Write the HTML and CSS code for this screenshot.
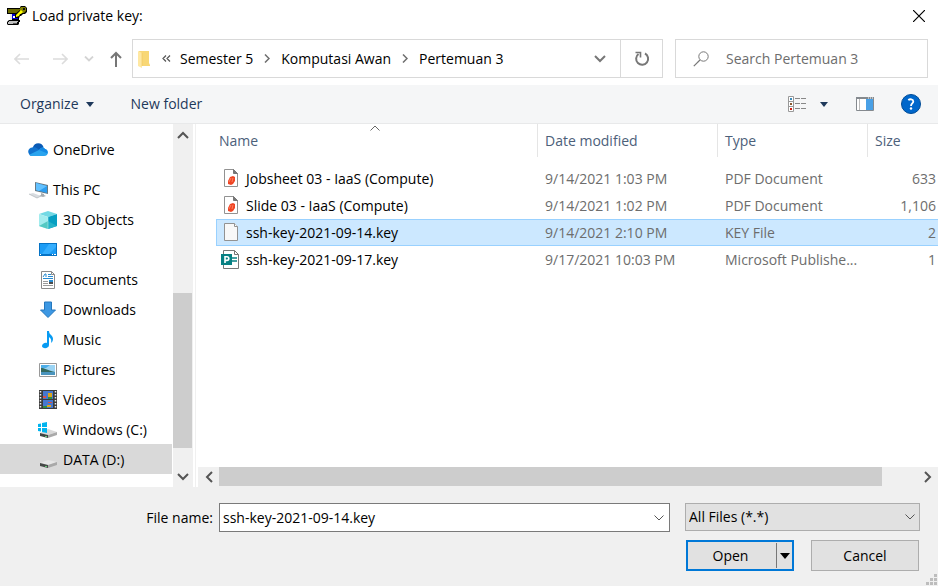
FILE: index.html
```html
<!DOCTYPE html>
<html lang="en">
<head>
<meta charset="utf-8">
<meta name="viewport" content="width=device-width, initial-scale=1">
<title>Load private key</title>
<link rel="stylesheet" href="styles.css">
</head>
<body>
<div class="dialog">
  <header class="titlebar">
    <svg class="app-icon" width="20" height="20" viewBox="0 0 20 20" aria-hidden="true">
      <path d="M0 2h14v6H0z" fill="#000"/><path d="M1 3h12v4H1z" fill="#6b6b00"/>
      <path d="M3 8h9v7H3z" fill="#000"/><path d="M3 8h2v6H3z" fill="#e8e8e8"/><path d="M5 8h6v5H5z" fill="#0000d8"/><path d="M6 10h2v2H6z" fill="#fff"/>
      <path d="M2 14h11v2h-1v2l-1 1H1l-1-1v-2z" fill="#000"/><path d="M2 15h9v1H2zM1 16h9v2H1z" fill="#c0c0c0"/><path d="M6 17h4v1H6z" fill="#555"/>
      <path d="M14 0h4l2 2v4l-2 2h-2l-2 2h-1l-1 2H8V8l5-4V1z" fill="#000"/>
      <path d="M14 1h4l1 1v3l-2 2h-2l-2-2V2z" fill="#808000"/><path d="M14 4l2 2-2 2h-1l-1 2-3 1V9z" fill="#ff0"/><path d="M16 2h2v2h-2z" fill="#111"/>
    </svg>
    <h1 class="title">Load private key:</h1>
    <button class="icon-button close" aria-label="Close"><svg width="12" height="12" viewBox="0 0 12 12"><path d="M0 0l12 12M12 0L0 12" stroke="#000" stroke-width="1.2"/></svg></button>
  </header>

  <div class="navbar">
    <nav class="history" aria-label="History">
      <button class="icon-button" aria-label="Back"><svg width="16" height="12" viewBox="0 0 16 12"><path d="M15 6H1M6 1L1 6l5 5" fill="none" stroke="#dcdcdc" stroke-width="1.6"/></svg></button>
      <button class="icon-button" aria-label="Forward"><svg width="16" height="12" viewBox="0 0 16 12"><path d="M1 6h14M10 1l5 5-5 5" fill="none" stroke="#dcdcdc" stroke-width="1.6"/></svg></button>
      <button class="icon-button recent" aria-label="Recent locations"><svg width="10" height="6" viewBox="0 0 10 6"><path d="M1 .5l4 4 4-4" fill="none" stroke="#d4d4d4" stroke-width="1.800"/></svg></button>
      <button class="icon-button" aria-label="Up"><svg width="12" height="16" viewBox="0 0 12 16"><path d="M6 16V2M1 7l5-5 5 5" fill="none" stroke="#767676" stroke-width="2"/></svg></button>
    </nav>
    <div class="address">
      <svg class="folder" width="12" height="18" viewBox="0 0 12 18" aria-hidden="true"><path d="M1 1h10v12l1 2v1H2z" fill="#f8d775"/><path d="M0 1l4 2v15l-4-2z" fill="#ffe8a2"/><path d="M4 3v13" stroke="#ecc45c" stroke-width=".6"/></svg>
      <svg class="overflow" width="9" height="7" viewBox="0 0 9 7" aria-hidden="true"><path d="M4 .5l-3 3 3 3M8 .5l-3 3 3 3" fill="none" stroke="#555" stroke-width="1.200"/></svg>
      <a class="crumb" href="#">Semester 5</a>
      <svg class="sep" width="6" height="9" viewBox="0 0 6 9" aria-hidden="true"><path d="M1 .5l4 4-4 4" fill="none" stroke="#6d6d6d" stroke-width="1.500"/></svg>
      <a class="crumb" href="#">Komputasi Awan</a>
      <svg class="sep" width="6" height="9" viewBox="0 0 6 9" aria-hidden="true"><path d="M1 .5l4 4-4 4" fill="none" stroke="#6d6d6d" stroke-width="1.500"/></svg>
      <a class="crumb" href="#">Pertemuan 3</a>
      <button class="icon-button drop" aria-label="Previous locations"><svg width="12" height="8" viewBox="0 0 12 8"><path d="M1 1l5 5 5-5" fill="none" stroke="#777" stroke-width="2"/></svg></button>
      <button class="icon-button refresh" aria-label="Refresh"><svg width="16" height="16" viewBox="0 0 16 16"><path d="M11 2.500A6 6 0 1 1 4.500 3" fill="none" stroke="#777" stroke-width="2"/><path d="M1.500 1.500h5v5" fill="none" stroke="#777" stroke-width="1.600"/></svg></button>
    </div>
    <label class="search">
      <svg width="16" height="16" viewBox="0 0 16 16" aria-hidden="true"><circle cx="10.500" cy="5.500" r="4.700" fill="none" stroke="#777"/><path d="M7 9L.8 15.200" stroke="#777" stroke-width="1.200"/></svg>
      <input type="search" placeholder="Search Pertemuan 3" aria-label="Search Pertemuan 3">
    </label>
  </div>

  <div class="toolbar">
    <button class="command">Organize <svg width="8" height="5" viewBox="0 0 8 5" aria-hidden="true"><path d="M0 0h8L4 5z" fill="#1e395b"/></svg></button>
    <button class="command">New folder</button>
    <div class="tools">
      <button class="icon-button" aria-label="Change view"><svg width="19" height="16" viewBox="0 0 19 16"><path d="M.5.500h5v15h-5zM.5 5.500h5M.5 10.500h5" fill="#fff" stroke="#999"/><path d="M2 2h2v2H2z" fill="#3b8bba"/><path d="M2 7h2v2H2z" fill="#8a5a30"/><path d="M2 12h2v2H2z" fill="#d02010"/><path d="M7 2.500h5m1 0h5M7 7.500h5m1 0h5M7 12.500h5m1 0h5" stroke="#888"/></svg></button>
      <button class="icon-button" aria-label="More views"><svg width="8" height="5" viewBox="0 0 8 5"><path d="M0 0h8L4 5z" fill="#1e395b"/></svg></button>
      <button class="icon-button preview" aria-label="Preview pane"><svg width="18" height="14" viewBox="0 0 18 14"><path d="M.5.500h17v13H.5z" fill="#fff" stroke="#858a8f"/><path d="M0 0h18v2H0z" fill="#858a8f"/><path d="M3.500 2v11" stroke="#bbb"/><path d="M10 2h7v11h-7z" fill="#49a0e6"/><path d="M12 1h1m1 0h1m1 0h1" stroke="#fff"/></svg></button>
      <button class="icon-button" aria-label="Help"><svg width="20" height="20" viewBox="0 0 20 20"><circle cx="10" cy="10" r="9.500" fill="#0067cb" stroke="#004c97"/><path d="M7.300 6.200c1.500-1.500 5-1.200 5 1.300C12.300 9.500 10 9.500 10 12" fill="none" stroke="#fff" stroke-width="1.800"/><circle cx="10" cy="14.500" r="1.200" fill="#fff"/></svg></button>
    </div>
  </div>

  <main class="body">
    <aside class="sidebar">
      <ul class="tree">
        <li><a class="node root" href="#"><svg width="20" height="20" viewBox="0 0 20 20" aria-hidden="true"><path d="M5 7a5.500 5.500 0 0 1 10.500 0L12 12 4 9z" fill="#0a5ab5"/><path d="M1 14C-1 11 1 7.500 4.500 7.500c2-.5 4 0 5.500 1.500l7 5-4 2H4c-1.500 0-2.500-.8-3-2z" fill="#1173cf"/><path d="M11 10c1.500-3 5-3.500 6-1 4 .5 4 7-1 7H4c-1 0-2-.5-2.700-1.300z" fill="#2aa4ee"/><path d="M11 10c1.500-3 5-3.500 6-1 2 .3 3 2.500 2.500 4.500z" fill="#1389e4"/></svg>OneDrive</a></li>
        <li class="group"><a class="node root" href="#"><svg width="20" height="20" viewBox="0 0 20 20" aria-hidden="true"><path d="M7 2l13 3v9L7 11z" fill="#667985"/><path d="M8 3l11 3v7L8 10z" fill="#2b9df0"/><path d="M8 3l11 3-8 5-3-1z" fill="#62c1ff"/><path d="M13 13l3 1v1l2 1-3 1-4-1 2-1z" fill="#a7adb2"/><path d="M1 14l4-1 8 3-4 2z" fill="#d8dce0"/><path d="M1 14l8 4 4-2" fill="none" stroke="#aeb3b8" stroke-width=".7"/></svg>This PC</a></li>
        <li><a class="node" href="#"><svg width="18" height="18" viewBox="0 0 18 18" aria-hidden="true"><path d="M0 3l9-3 9 3-9 3z" fill="#72d9e4"/><path d="M0 3l9 3v12l-9-3z" fill="#a2ecee"/><path d="M9 6l9-3v12l-9 3z" fill="#079fc2"/><path d="M0 15l9-5v8z" fill="#54c9c3"/><path d="M9 10l9 5-9 3z" fill="#25b2c8"/><path d="M9 6v12" stroke="#c5f3f3" stroke-width=".5"/></svg>3D Objects</a></li>
        <li><a class="node" href="#"><svg width="18" height="18" viewBox="0 0 18 18" aria-hidden="true"><path d="M0 2h18v13H0z" fill="#0673c5"/><path d="M1 3h16v10H1z" fill="#1c9cf5"/><path d="M10 3h7v3l-7 7H3z" fill="#35aefe"/><path d="M1 13.500h1m11 0h1m1 0h2" stroke="#fff"/></svg>Desktop</a></li>
        <li><a class="node" href="#"><svg width="18" height="18" viewBox="0 0 18 18" aria-hidden="true"><path d="M2.500.500h10l3 3v14h-13z" fill="#fff" stroke="#8a8a8a"/><path d="M12.500.500v3h3" fill="none" stroke="#8a8a8a"/><path d="M4 6l2-3h1v3M9 3.500h3M9 5.500h5M4 7.500h10" fill="none" stroke="#278bd2"/><path d="M4 10.500h5m-5 2h5m-5 2h10" stroke="#9a9a9a"/><path d="M10 9h4v4h-4z" fill="#278bd2"/><path d="M10 11h4v2h-4z" fill="#4c4c4c"/></svg>Documents</a></li>
        <li><a class="node" href="#"><svg width="18" height="18" viewBox="0 0 18 18" aria-hidden="true"><path d="M5.500 1h7v8h4L9 16.500 1.500 9h4z" fill="#3d98e3" stroke="#2577bd"/></svg>Downloads</a></li>
        <li><a class="node" href="#"><svg width="18" height="18" viewBox="0 0 18 18" aria-hidden="true"><path d="M8 0h2c0 4 4 4 4 8 0 2-1 3-2 4 1-4-1-5-2-6v8c0 4-7 4-7 1 0-2 3-4 5-3z" fill="#089bf2"/></svg>Music</a></li>
        <li><a class="node" href="#"><svg width="18" height="18" viewBox="0 0 18 18" aria-hidden="true"><path d="M.5 2.500h17v13H.5z" fill="#fff" stroke="#999"/><path d="M2 4h14v10H2z" fill="#9bd4f4"/><path d="M2 4h9L7 7H2z" fill="#4daee9"/><path d="M2 7c4 0 5 2 14 4v1H2z" fill="#34695e"/><path d="M2 11h14v3H2z" fill="#4a94bd"/></svg>Pictures</a></li>
        <li><a class="node" href="#"><svg width="18" height="20" viewBox="0 0 18 20" aria-hidden="true"><path d="M0 0h18v19H0z" fill="#3c3c3c"/><path d="M1.500 1v18M16.500 1v18" stroke="#eee" stroke-width="1.500" stroke-dasharray="1.500 1.500"/><path d="M4 1h10v8H4zM4 10h10v8H4z" fill="#4778cf"/><path d="M9 3h4v4H9zM8 15h4v2H8z" fill="#dca51b"/><path d="M4 6h3v2H4zM9 12h4v1H9z" fill="#d95148"/><path d="M9 7h4v2H9zM4 16h4v2H4z" fill="#318c44"/></svg>Videos</a></li>
        <li><a class="node" href="#"><svg width="20" height="18" viewBox="0 0 20 18" aria-hidden="true"><path d="M2 12l8-4 9 3-9 3z" fill="#d9d9d9"/><path d="M2 12l8 2v3l-8-2z" fill="#3f4443"/><path d="M10 14l9-3v3l-9 3z" fill="#aaa"/><path d="M7 15.500h2" stroke="#65cc77"/><path d="M0 3l3-.5V6H0zM4 2l5-1v5H4zM0 7h3v3.500L0 10zM4 7h5v5l-5-1z" fill="#00b4ef"/></svg>Windows (C:)</a></li>
        <li><a class="node current" href="#"><svg width="20" height="18" viewBox="0 0 20 18" aria-hidden="true"><path d="M2 12l8-3 9 2-9 3z" fill="#e6e6e6"/><path d="M2 12l8 2v3l-8-2z" fill="#454947"/><path d="M10 14l9-3v3l-9 3z" fill="#a9a9a9"/><path d="M7 15.500h2" stroke="#65cc77"/></svg>DATA (D:)</a></li>
      </ul>
      <div class="vscroll">
        <button class="icon-button" aria-label="Scroll up"><svg width="12" height="8" viewBox="0 0 12 8"><path d="M1 7l5-5 5 5" fill="none" stroke="#555" stroke-width="2"/></svg></button>
        <div class="vtrack"><div class="vthumb"></div></div>
        <button class="icon-button" aria-label="Scroll down"><svg width="12" height="8" viewBox="0 0 12 8"><path d="M1 1l5 5 5-5" fill="none" stroke="#555" stroke-width="2"/></svg></button>
      </div>
    </aside>

    <section class="files">
      <table class="list">
        <colgroup><col class="col-name"><col class="col-date"><col class="col-type"><col></colgroup>
        <thead>
          <tr><th scope="col" class="sorted">Name<svg class="sort" width="10" height="6" viewBox="0 0 10 6" aria-hidden="true"><path d="M.5 5.500L5 1l4.500 4.500" fill="none" stroke="#666"/></svg></th><th scope="col">Date modified</th><th scope="col">Type</th><th scope="col">Size</th></tr>
        </thead>
        <tbody>
          <tr><td><span class="file"><svg width="20" height="20" viewBox="0 0 20 20" aria-hidden="true"><path d="M3.500.500h9l4 4v13h-13z" fill="#fff" stroke="#929292"/><path d="M12.500.500v4h4z" fill="#777" stroke="#777"/><path d="M9 8l3-1 2 1v4l-2 3-2 1-3-1v-3z" fill="#ef4524"/><path d="M8 13l2-4M11 13l1-4" stroke="#ff8d70" stroke-width=".8"/></svg>Jobsheet 03 - IaaS (Compute)</span></td><td>9/14/2021 1:03 PM</td><td>PDF Document</td><td>633</td></tr>
          <tr><td><span class="file"><svg width="20" height="20" viewBox="0 0 20 20" aria-hidden="true"><path d="M3.500.500h9l4 4v13h-13z" fill="#fff" stroke="#929292"/><path d="M12.500.500v4h4z" fill="#777" stroke="#777"/><path d="M9 8l3-1 2 1v4l-2 3-2 1-3-1v-3z" fill="#ef4524"/><path d="M8 13l2-4M11 13l1-4" stroke="#ff8d70" stroke-width=".8"/></svg>Slide 03 - IaaS (Compute)</span></td><td>9/14/2021 1:02 PM</td><td>PDF Document</td><td>1,106</td></tr>
          <tr class="selected"><td><span class="file"><svg width="20" height="20" viewBox="0 0 20 20" aria-hidden="true"><path d="M3.500.500h10l3 3v14h-13z" fill="#f8f8f8" stroke="#929292"/><path d="M13.500.500v3h3" fill="#fff" stroke="#929292"/></svg>ssh-key-2021-09-14.key</span></td><td>9/14/2021 2:10 PM</td><td>KEY File</td><td>2</td></tr>
          <tr><td><span class="file"><svg width="20" height="20" viewBox="0 0 20 20" aria-hidden="true"><path d="M2.500.500h11l4 4v14h-15z" fill="#fff" stroke="#777"/><path d="M13.500.500v4h4" fill="none" stroke="#777"/><path d="M11 8h5M11 11h5" stroke="#078083" stroke-width="1.500"/><path d="M0 4h11v11H0z" fill="#078083"/><path d="M4 13V6.800h2a1.800 1.800 0 0 1 0 3.600H4" fill="none" stroke="#fff" stroke-width="1.600"/></svg>ssh-key-2021-09-17.key</span></td><td>9/17/2021 10:03 PM</td><td>Microsoft Publishe...</td><td>1</td></tr>
        </tbody>
      </table>
      <div class="hscroll">
        <button class="icon-button" aria-label="Scroll left"><svg width="8" height="12" viewBox="0 0 8 12"><path d="M7 1L2 6l5 5" fill="none" stroke="#555" stroke-width="2"/></svg></button>
        <div class="htrack"><div class="hthumb"></div></div>
        <button class="icon-button" aria-label="Scroll right"><svg width="8" height="12" viewBox="0 0 8 12"><path d="M1 1l5 5-5 5" fill="none" stroke="#555" stroke-width="2"/></svg></button>
      </div>
    </section>
  </main>

  <footer class="footer">
    <label class="name-label" for="filename">File name:</label>
    <div class="combo">
      <input id="filename" type="text" value="ssh-key-2021-09-14.key">
      <button class="icon-button" aria-label="Recent file names"><svg width="10" height="6" viewBox="0 0 10 6"><path d="M.5.500L5 5 9.500.500" fill="none" stroke="#555"/></svg></button>
    </div>
    <div class="filter">
      <select aria-label="File type"><option>All Files (*.*)</option></select>
      <svg class="filter-arrow" width="10" height="6" viewBox="0 0 10 6" aria-hidden="true"><path d="M.5.500L5 5 9.500.500" fill="none" stroke="#555"/></svg>
    </div>
    <div class="actions">
      <div class="split">
        <button class="open">Open</button>
        <button class="open-more" aria-label="Open options"><svg width="10" height="6" viewBox="0 0 10 6"><path d="M0 0h10L5 6z" fill="#000"/></svg></button>
      </div>
      <button class="cancel">Cancel</button>
    </div>
    <svg class="grip" width="12" height="12" viewBox="0 0 12 12" aria-hidden="true"><path d="M8 0h3v3H8zM4 4h3v3H4zM8 4h3v3H8zM0 8h3v3H0zM4 8h3v3H4zM8 8h3v3H8z" fill="#bdbdbd"/></svg>
  </footer>
</div>
</body>
</html>
```
FILE: styles.css
```css
* { box-sizing: border-box; }

body {
  margin: 0;
  font: 14px/20px "Open Sans", "Noto Sans", sans-serif;
  color: #000;
  background: #fff;
}

button, input, select { font: inherit; color: inherit; }
button { padding: 0; border: 0; background: none; }
a { color: inherit; text-decoration: none; }
svg { display: block; flex: none; }

.dialog { display: flex; flex-direction: column; min-height: 100vh; }

.icon-button { display: flex; align-items: center; justify-content: center; flex: none; }

.titlebar { display: flex; align-items: center; height: 31px; padding: 0 13px 0 7px; }
.title { margin: 0 auto 0 5px; font-size: 14px; font-weight: 400; }

.navbar { display: flex; height: 54px; padding: 8px 10px 7px 14px; }
.history { display: flex; align-items: center; gap: 22px; width: 118px; }
.history .recent { margin: 0 -6px; }

.address { display: flex; flex: 1; align-items: center; border: 1px solid #d9d9d9; padding-left: 5px; }
.overflow { margin: 0 9px 0 12px; }
.sep { margin: 0 11px; }
.crumb { white-space: nowrap; }
.drop { width: 40px; margin-left: auto; }
.refresh { align-self: stretch; width: 42px; border-left: 1px solid #d9d9d9; }

.search { display: flex; align-items: center; gap: 17px; width: 253px; margin-left: 12px; padding-left: 17px; border: 1px solid #d9d9d9; }
.search input { flex: 1; min-width: 0; padding: 0; border: 0; outline: 0; background: none; }
.search input::placeholder { color: #6d6d6d; opacity: 1; }

.toolbar { display: flex; align-items: center; gap: 37px; height: 39px; padding: 0 17px 0 20px; color: #1e395b; background: #f5f6f7; border-bottom: 1px solid #e8e9ea; }
.command { display: flex; align-items: center; gap: 7px; }
.tools { display: flex; align-items: center; gap: 13px; margin-left: auto; }
.preview { margin: 0 14px 0 15px; }

.body { display: flex; flex: 1; }

.sidebar { display: flex; width: 196px; padding-right: 2px; border-right: 1px solid #f0f0f0; }
.tree { flex: 1; margin: 0 1px 0 0; padding: 10px 0 13px; list-style: none; }
.group { margin-top: 10px; }
.node { display: flex; align-items: center; gap: 5px; height: 30px; padding: 1px 0 0 38px; white-space: nowrap; }
.node svg { width: 20px; }
.node.root { padding-left: 28px; }
.node.current { background: #d9d9d9; }

.vscroll { display: flex; flex-direction: column; width: 20px; background: #f0f0f0; }
.vscroll .icon-button { height: 21px; }
.vtrack { display: flex; flex: 1; flex-direction: column; justify-content: flex-end; padding-bottom: 18px; }
.vthumb { width: 19px; height: 51%; background: #cdcdcd; }

.files { display: flex; flex: 1; flex-direction: column; min-width: 0; padding-left: 2px; }
.list { margin-left: 18px; table-layout: fixed; border-collapse: separate; border-spacing: 0; }
.col-name { width: 322px; }
.col-date { width: 180px; }
.col-type { width: 150px; }
.list th { height: 33px; padding: 0 0 0 7px; font-weight: 400; text-align: left; color: #4c607a; border-right: 1px solid #e5e5e5; }
.list th:first-child { padding-left: 3px; }
.list th:last-child { border-right: 0; }
.sorted { position: relative; }
.sort { position: absolute; top: 1px; left: 48%; }
.list tbody::before { content: ""; display: table-row; height: 8px; }
.list td { height: 27px; padding: 0 0 0 7px; color: #6d6d6d; white-space: nowrap; }
.list td:first-child { padding-left: 5px; color: #000; }
.list td:last-child { padding: 0 2px 0 0; text-align: right; }
.file { display: flex; align-items: center; gap: 5px; }
.selected td { background: #cce8ff; box-shadow: inset 0 1px #99d1ff, inset 0 -1px #99d1ff; }
.selected td:first-child { box-shadow: inset 0 1px #99d1ff, inset 0 -1px #99d1ff, inset 1px 0 #99d1ff; }

.hscroll { display: flex; height: 20px; margin-top: auto; border-bottom: 1px solid #f0f0f0; background: #f0f0f0; }
.hscroll .icon-button { width: 21px; }
.htrack { flex: 1; }
.hthumb { width: 95%; height: 100%; background: #cdcdcd; }

.footer { position: relative; display: grid; grid-template-columns: 213px 1fr 235px; grid-template-rows: 29px 31px; gap: 8px 0; height: 99px; padding: 16px 18px 15px 0; background: #f0f0f0; }
.name-label { align-self: center; text-align: right; }
.combo { display: flex; margin: 0 15px 0 6px; border: 1px solid #7a7a7a; background: #fff; }
.combo input { flex: 1; min-width: 0; padding: 0 3px; border: 0; outline: 0; background: none; }
.combo .icon-button { width: 20px; }
.filter { position: relative; height: 28px; }
.filter select { width: 100%; height: 100%; padding: 0 3px; border: 1px solid #adadad; border-radius: 0; background: #e1e1e1; appearance: none; }
.filter-arrow { position: absolute; top: 11px; right: 5px; pointer-events: none; }
.actions { display: flex; grid-column: 3; justify-content: space-between; padding: 0 1px; }
.split { display: flex; width: 108px; border: 2px solid #0078d7; background: #e1e1e1; }
.open { flex: 1; padding-right: 3px; }
.open-more { display: flex; align-items: center; justify-content: center; width: 16px; margin: 1px 0; border-left: 1px solid #777; }
.cancel { width: 108px; border: 1px solid #adadad; background: #e1e1e1; }
.grip { position: absolute; right: 0; bottom: 0; }
```
